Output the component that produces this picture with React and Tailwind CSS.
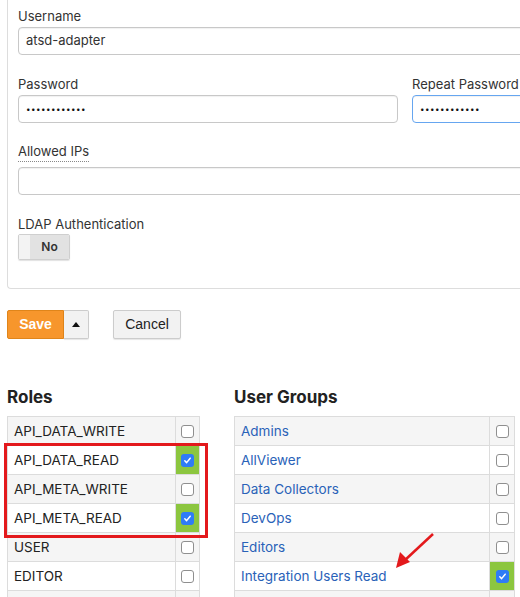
import React from "react";

const roles = [
  { name: "API_DATA_WRITE", checked: false },
  { name: "API_DATA_READ", checked: true },
  { name: "API_META_WRITE", checked: false },
  { name: "API_META_READ", checked: true },
  { name: "USER", checked: false },
  { name: "EDITOR", checked: false },
  { name: "", checked: false },
];

const groups = [
  { name: "Admins", checked: false },
  { name: "AllViewer", checked: false },
  { name: "Data Collectors", checked: false },
  { name: "DevOps", checked: false },
  { name: "Editors", checked: false },
  { name: "Integration Users Read", checked: true },
  { name: "", checked: false },
];

function Checkbox({ checked }) {
  if (checked) {
    return (
      <span className="flex h-[13px] w-[13px] items-center justify-center rounded-[3px] bg-[#2f7cf6]">
        <svg width="9" height="9" viewBox="0 0 9 9">
          <path d="M1.8 4.8 L3.6 6.6 L7.2 2.2" fill="none" stroke="#fff" strokeWidth="1.5" strokeLinecap="round" strokeLinejoin="round" />
        </svg>
      </span>
    );
  }
  return <span className="block h-[13px] w-[13px] rounded-[3px] border border-[#8f8f8f] bg-white" />;
}

function Field({ label, value, className, focused, dotted }) {
  return (
    <div className={className}>
      <div className="h-[18px] text-[13px] leading-[18px] text-[#333]">
        <span className={dotted ? "border-b border-dotted border-[#888] pb-[2px]" : ""}>{label}</span>
      </div>
      <div
        className={
          (dotted ? "mt-[7px] " : "mt-[2px] ") +
          "flex h-[28px] items-center rounded-[4px] border bg-white px-[7px] text-[13px] shadow-[inset_0_1px_1px_rgba(0,0,0,0.06)] " +
          (focused ? "border-[#66a6f0]" : "border-[#c8c8c8]")
        }
      >
        {value}
      </div>
    </div>
  );
}

function Dots() {
  return <span className="text-[8px] tracking-[0.5px] text-[#111]">••••••••••••</span>;
}

function ListTable({ rows, link, width, checkCol }) {
  return (
    <table className="border-collapse text-[13.5px]" style={{ width }}>
      <tbody>
        {rows.map((row, i) => (
          <tr key={i} className={i % 2 === 0 ? "bg-[#f5f5f5]" : "bg-white"}>
            <td className={"h-[29px] border border-[#dcdcdc] px-[6px] " + (link ? "text-[#2a62b8]" : "text-[#222]")}>
              {row.name}
            </td>
            <td
              className={"h-[29px] border border-[#dcdcdc] " + (row.checked ? "bg-[#8cc63f]" : "")}
              style={{ width: checkCol }}
            >
              <div className="flex justify-center">
                <Checkbox checked={row.checked} />
              </div>
            </td>
          </tr>
        ))}
      </tbody>
    </table>
  );
}

export default function App() {
  return (
    <div className="relative h-[597px] w-[520px] overflow-hidden bg-white font-['Inter',sans-serif] text-[#333]">
      <div className="ml-[7px] w-[800px] rounded-bl-[4px] border-b border-l border-[#dddddd] pb-[28px] pl-[10px] pt-[7px]">
        <div className="w-[774px]">
          <Field label="Username" value="atsd-adapter" />
          <div className="mt-[20px] grid grid-cols-2 gap-[14px]">
            <Field label="Password" value={<Dots />} />
            <Field label="Repeat Password" focused value={<Dots />} />
          </div>
          <Field className="mt-[19px]" label="Allowed IPs" value="" dotted />
          <div className="mt-[20px]">
            <div className="h-[18px] text-[13px] leading-[18px]">LDAP Authentication</div>
            <div className="mt-[1px] flex h-[26px] w-[52px] overflow-hidden rounded-[2px] border border-[#cfcfcf] shadow-[0_1px_1px_rgba(0,0,0,0.12)]">
              <div className="w-[11px] bg-[#f3f3f3]" />
              <div className="flex flex-1 items-center justify-center bg-[#e2e2e2] text-[12px] font-semibold text-[#333]">
                No
              </div>
            </div>
          </div>
        </div>
      </div>

      <div className="ml-[7px] mt-[21px] flex font-['Liberation_Sans',sans-serif] text-[14px]">
        <button className="h-[29px] w-[57px] rounded-l-[2px] border border-[#e0851a] bg-[#f7962c] font-bold text-white">
          Save
        </button>
        <button className="flex h-[29px] w-[25px] items-center justify-center rounded-r-[2px] border border-l-0 border-[#cccccc] bg-[#f2f2f2] shadow-[0_1px_1px_rgba(0,0,0,0.1)]">
          <svg width="8" height="5" viewBox="0 0 8 5">
            <path d="M0 5 L4 0 L8 5 Z" fill="#111" />
          </svg>
        </button>
        <button className="ml-[24px] h-[29px] w-[68px] rounded-[2px] border border-[#cccccc] bg-[#f2f2f2] text-[#222] shadow-[0_1px_1px_rgba(0,0,0,0.1)]">
          Cancel
        </button>
      </div>

      <div className="ml-[7px] mt-[47px] flex gap-[34px]">
        <div>
          <h3 className="h-[22px] text-[17px] font-bold leading-[22px] text-[#222]">Roles</h3>
          <div className="mt-[8px]">
            <ListTable rows={roles} width={193} checkCol={24} />
          </div>
        </div>
        <div>
          <h3 className="h-[22px] text-[17px] font-bold leading-[22px] text-[#222]">User Groups</h3>
          <div className="mt-[8px]">
            <ListTable rows={groups} link width={281} checkCol={25} />
          </div>
        </div>
      </div>

      <div className="pointer-events-none absolute left-[4px] top-[443px] h-[95px] w-[204px] border-[3px] border-[#e3191c]" />

      <svg className="pointer-events-none absolute left-0 top-0" width="520" height="597">
        <line x1="433" y1="534" x2="404" y2="561" stroke="#e3191c" strokeWidth="2.5" />
        <path d="M396 568 L400 552 L410 562 Z" fill="#e3191c" />
      </svg>
    </div>
  );
}
